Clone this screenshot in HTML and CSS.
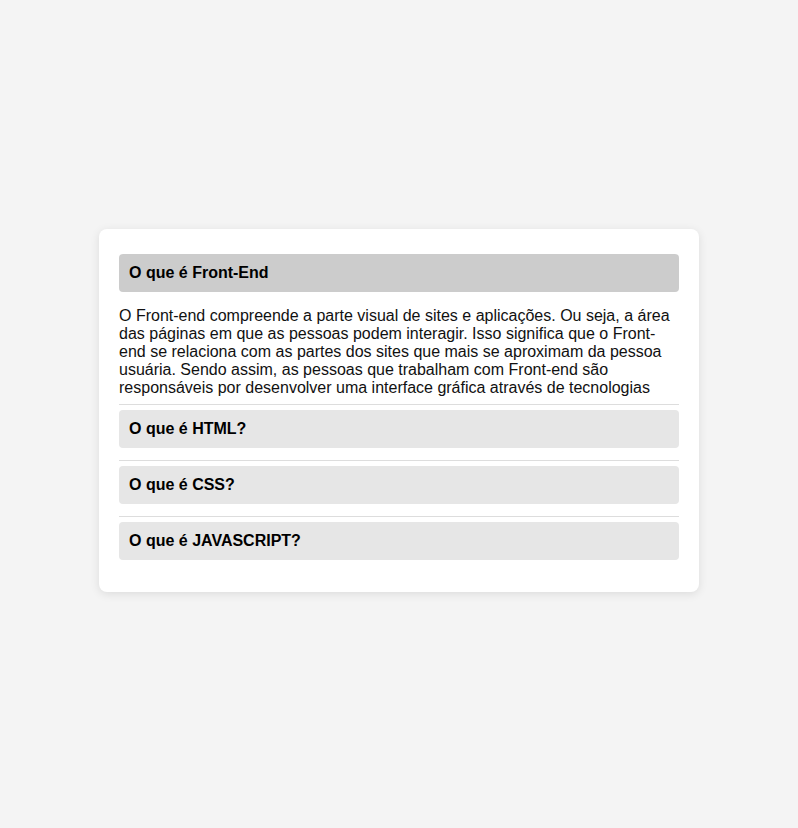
FILE: index.html
```html
<!DOCTYPE html>
<html lang="pt-BR">
<head>
<meta charset="utf-8">
<title>FAQ</title>
<link rel="stylesheet" href="styles.css">
</head>
<body>
<div class="accordion">
  <div class="item open">
    <div class="header">O que é Front-End</div>
    <div class="content">O Front-end compreende a parte visual de sites e aplicações. Ou seja, a área das páginas em que as pessoas podem interagir. Isso significa que o Front-end se relaciona com as partes dos sites que mais se aproximam da pessoa usuária. Sendo assim, as pessoas que trabalham com Front-end são responsáveis por desenvolver uma interface gráfica através de tecnologias como HTML, CSS e JavaScript.</div>
  </div>
  <div class="item">
    <div class="header">O que é HTML?</div>
    <div class="content"></div>
  </div>
  <div class="item">
    <div class="header">O que é CSS?</div>
    <div class="content"></div>
  </div>
  <div class="item">
    <div class="header">O que é JAVASCRIPT?</div>
    <div class="content"></div>
  </div>
</div>
</body>
</html>
```
FILE: styles.css
```css
html, body {
  margin: 0;
  padding: 0;
}
body {
  background: #f4f4f4;
  font-family: "Liberation Sans", Arial, sans-serif;
  font-size: 16px;
  color: #111;
  min-height: 100vh;
  box-sizing: border-box;
  padding-bottom: 7px;
  display: flex;
  align-items: center;
  justify-content: center;
}
.accordion {
  width: 600px;
  box-sizing: border-box;
  background: #fff;
  border-radius: 8px;
  padding: 20px;
  box-shadow: 0 2px 10px rgba(0, 0, 0, 0.1);
}
.item {
  padding-top: 5px;
}
.item + .item {
  border-top: 1px solid #ddd;
}
.header {
  background: #e6e6e6;
  border-radius: 4px;
  padding: 10px;
  font-weight: bold;
  color: #000;
  line-height: 18px;
}
.item.open .header {
  background: #ccc;
}
.content {
  height: 12px;
  overflow: hidden;
  line-height: 18px;
}
.item.open .content {
  padding-top: 15px;
  height: 90px;
  margin-bottom: 7px;
}
```
